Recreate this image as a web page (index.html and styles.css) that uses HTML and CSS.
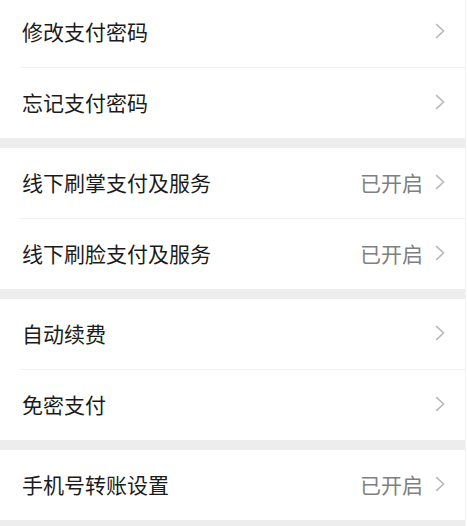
FILE: index.html
```html
<!DOCTYPE html>
<html lang="zh-CN">
<head>
    <meta charset="UTF-8">
    <meta name="viewport" content="width=device-width, initial-scale=1.0">
    <title>支付设置</title>
    <link rel="stylesheet" href="styles.css">
</head>
<body>
    <div class="settings">
        <section class="group">
            <div class="row">
                <span class="label">修改支付密码</span>
                <span class="arrow"><svg width="10" height="16" viewBox="0 0 10 16"><path d="M1.2 1.2 L8.5 8 L1.2 14.8" fill="none" stroke="#b9b9b9" stroke-width="1.6"/></svg></span>
            </div>
            <div class="row">
                <span class="label">忘记支付密码</span>
                <span class="arrow"><svg width="10" height="16" viewBox="0 0 10 16"><path d="M1.2 1.2 L8.5 8 L1.2 14.8" fill="none" stroke="#b9b9b9" stroke-width="1.6"/></svg></span>
            </div>
        </section>

        <section class="group">
            <div class="row">
                <span class="label">线下刷掌支付及服务</span>
                <span class="status">已开启</span>
                <span class="arrow"><svg width="10" height="16" viewBox="0 0 10 16"><path d="M1.2 1.2 L8.5 8 L1.2 14.8" fill="none" stroke="#b9b9b9" stroke-width="1.6"/></svg></span>
            </div>
            <div class="row">
                <span class="label">线下刷脸支付及服务</span>
                <span class="status">已开启</span>
                <span class="arrow"><svg width="10" height="16" viewBox="0 0 10 16"><path d="M1.2 1.2 L8.5 8 L1.2 14.8" fill="none" stroke="#b9b9b9" stroke-width="1.6"/></svg></span>
            </div>
        </section>

        <section class="group">
            <div class="row">
                <span class="label">自动续费</span>
                <span class="arrow"><svg width="10" height="16" viewBox="0 0 10 16"><path d="M1.2 1.2 L8.5 8 L1.2 14.8" fill="none" stroke="#b9b9b9" stroke-width="1.6"/></svg></span>
            </div>
            <div class="row">
                <span class="label">免密支付</span>
                <span class="arrow"><svg width="10" height="16" viewBox="0 0 10 16"><path d="M1.2 1.2 L8.5 8 L1.2 14.8" fill="none" stroke="#b9b9b9" stroke-width="1.6"/></svg></span>
            </div>
        </section>

        <section class="group">
            <div class="row">
                <span class="label">手机号转账设置</span>
                <span class="status">已开启</span>
                <span class="arrow"><svg width="10" height="16" viewBox="0 0 10 16"><path d="M1.2 1.2 L8.5 8 L1.2 14.8" fill="none" stroke="#b9b9b9" stroke-width="1.6"/></svg></span>
            </div>
        </section>
    </div>
</body>
</html>
```

FILE: styles.css
```css
body {
    margin: 0;
    background-color: #fff;
    font-family: "Noto Sans CJK SC", "Noto Sans", sans-serif;
}
.settings {
    margin-top: -3px;
    margin-right: 2px;
    padding-bottom: 10px;
    background-color: #ededed;
    border-right: 1px solid #f2f2f2;
}
.group {
    background-color: #fff;
    margin-bottom: 10px;
}
.group:last-child {
    margin-bottom: 0;
}
.row {
    display: flex;
    align-items: center;
    box-sizing: border-box;
    height: 70px;
    padding: 0 20px 3px 22px;
}
.row + .row {
    height: 71px;
    border-top: 1px solid #f0f0f0;
    margin-left: 20px;
    padding-left: 2px;
}
.label {
    flex: 1;
    font-size: 21px;
    color: #1b1b1b;
}
.status {
    font-size: 21px;
    color: #7f7f7f;
    margin-right: 12px;
}
.arrow {
    display: flex;
    align-items: center;
}
```
